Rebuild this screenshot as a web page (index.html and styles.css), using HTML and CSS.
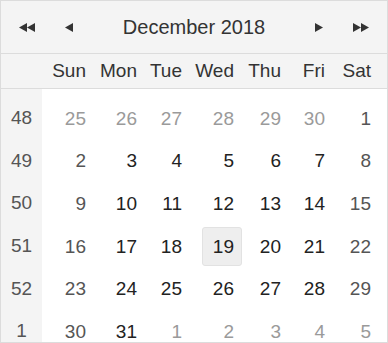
FILE: index.html
```html
<!DOCTYPE html>
<html lang="en">
<head>
    <meta charset="UTF-8">
    <title>Calendar</title>
    <link rel="stylesheet" href="styles.css">
</head>
<body>
    <div class="calendar">
        <div class="cal-header">
            <span class="nav nav-wide">
                <svg width="16" height="9" viewBox="0 0 16 9"><polygon points="8,0 8,9 0,4.5"/><polygon points="16,0 16,9 8,4.5"/></svg>
            </span>
            <span class="nav">
                <svg width="8" height="9" viewBox="0 0 8 9"><polygon points="8,0 8,9 0,4.5"/></svg>
            </span>
            <span class="title">December 2018</span>
            <span class="nav">
                <svg width="8" height="9" viewBox="0 0 8 9"><polygon points="0,0 0,9 8,4.5"/></svg>
            </span>
            <span class="nav nav-wide">
                <svg width="16" height="9" viewBox="0 0 16 9"><polygon points="0,0 0,9 8,4.5"/><polygon points="8,0 8,9 16,4.5"/></svg>
            </span>
        </div>

        <div class="day-names">
            <span class="spacer"></span>
            <span>Sun</span>
            <span>Mon</span>
            <span>Tue</span>
            <span>Wed</span>
            <span>Thu</span>
            <span>Fri</span>
            <span>Sat</span>
        </div>

        <div class="cal-body">
            <div class="week-nums">
                <span>48</span>
                <span>49</span>
                <span>50</span>
                <span>51</span>
                <span>52</span>
                <span>1</span>
            </div>
            <div class="days">
                <span class="day other"><b>25</b></span>
                <span class="day other"><b>26</b></span>
                <span class="day other"><b>27</b></span>
                <span class="day other"><b>28</b></span>
                <span class="day other"><b>29</b></span>
                <span class="day other"><b>30</b></span>
                <span class="day weekend"><b>1</b></span>

                <span class="day weekend"><b>2</b></span>
                <span class="day"><b>3</b></span>
                <span class="day"><b>4</b></span>
                <span class="day"><b>5</b></span>
                <span class="day"><b>6</b></span>
                <span class="day"><b>7</b></span>
                <span class="day weekend"><b>8</b></span>

                <span class="day weekend"><b>9</b></span>
                <span class="day"><b>10</b></span>
                <span class="day"><b>11</b></span>
                <span class="day"><b>12</b></span>
                <span class="day"><b>13</b></span>
                <span class="day"><b>14</b></span>
                <span class="day weekend"><b>15</b></span>

                <span class="day weekend"><b>16</b></span>
                <span class="day"><b>17</b></span>
                <span class="day"><b>18</b></span>
                <span class="day today"><b>19</b></span>
                <span class="day"><b>20</b></span>
                <span class="day"><b>21</b></span>
                <span class="day weekend"><b>22</b></span>

                <span class="day weekend"><b>23</b></span>
                <span class="day"><b>24</b></span>
                <span class="day"><b>25</b></span>
                <span class="day"><b>26</b></span>
                <span class="day"><b>27</b></span>
                <span class="day"><b>28</b></span>
                <span class="day weekend"><b>29</b></span>

                <span class="day weekend"><b>30</b></span>
                <span class="day"><b>31</b></span>
                <span class="day other"><b>1</b></span>
                <span class="day other"><b>2</b></span>
                <span class="day other"><b>3</b></span>
                <span class="day other"><b>4</b></span>
                <span class="day other"><b>5</b></span>
            </div>
        </div>
    </div>
</body>
</html>
```

FILE: styles.css
```css
body {
    margin: 0;
    font-family: 'Liberation Sans', Arial, sans-serif;
    background-color: #fff;
}

.calendar {
    width: 388px;
    height: 343px;
    box-sizing: border-box;
    border: 1px solid #dcdcdc;
    overflow: hidden;
    color: #333;
}

.cal-header {
    display: flex;
    align-items: center;
    height: 52px;
    background-color: #f4f4f4;
    border-bottom: 1px solid #dcdcdc;
}

.nav {
    width: 32px;
    display: flex;
    justify-content: center;
    align-items: center;
    fill: #333;
}

.nav-wide {
    width: 52px;
}

.title {
    flex: 1;
    text-align: center;
    font-size: 20px;
    color: #333;
}

.day-names {
    display: grid;
    grid-template-columns: 41px 52px 51px 45px 52px 47px 44px 46px;
    height: 34px;
    align-items: center;
    background-color: #f4f4f4;
    border-bottom: 1px solid #dcdcdc;
    font-size: 19px;
    color: #333;
}

.day-names span {
    text-align: right;
    padding-right: 8px;
}

.day-names .spacer {
    padding: 0;
}

.cal-body {
    display: flex;
}

.week-nums {
    width: 41px;
    padding-top: 8px;
    background-color: #f4f4f4;
    display: grid;
    grid-auto-rows: 42.6px;
    align-items: center;
    text-align: center;
    font-size: 19px;
    color: #555;
}

.days {
    flex: 1;
    padding-top: 8px;
    display: grid;
    grid-template-columns: 52px 51px 45px 52px 47px 44px 46px;
    grid-auto-rows: 42.6px;
    font-size: 19px;
}

.day {
    display: flex;
    justify-content: flex-end;
    align-items: center;
    color: #222;
}

.day b {
    font-weight: normal;
    width: 40px;
    height: 39px;
    line-height: 37px;
    box-sizing: border-box;
    border: 1px solid transparent;
    border-radius: 3px;
    text-align: right;
    padding-right: 7px;
}

.day.weekend {
    color: #555;
}

.day.other {
    color: #9a9a9a;
}

.day.today b {
    background-color: #eee;
    border-color: #e2e2e2;
}
```
